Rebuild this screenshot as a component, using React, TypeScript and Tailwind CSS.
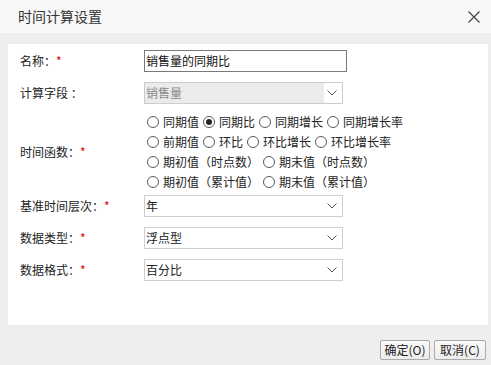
import React from "react";

const font = { fontFamily: '"Noto Sans CJK SC", "Microsoft YaHei", sans-serif' };

function Chevron() {
  return (
    <svg width="10" height="6" viewBox="0 0 10 6" className="block">
      <path d="M0.5 0.5 L5 5 L9.5 0.5" fill="none" stroke="#555" strokeWidth="1" />
    </svg>
  );
}

function Select({ value, disabled }: { value: string; disabled?: boolean }) {
  return (
    <div
      className={`flex h-[22px] w-[199px] items-center border ${
        disabled ? "border-[#cccccc] bg-[#ebebeb] text-[#8a8a8a]" : "border-[#cfcfcf] bg-white text-[#222]"
      }`}
    >
      <span className="flex-1 pl-[1px] text-[12px] leading-none">{value}</span>
      <span className="flex h-full w-[18px] items-center justify-center bg-white pr-[2px]">
        <Chevron />
      </span>
    </div>
  );
}

function Label({ text, req, colon = "：" }: { text: string; req?: boolean; colon?: string }) {
  return (
    <div className="w-[124px] shrink-0 text-[12px] leading-none text-[#222]">
      {text}
      {colon}
      {req && <span className="text-[#e00000]">*</span>}
    </div>
  );
}

function Radio({ label, checked }: { label: string; checked?: boolean }) {
  return (
    <span className="mr-[4px] inline-flex items-center">
      <span className="flex h-[12px] w-[12px] items-center justify-center rounded-full border border-[#5a5a5a] bg-white">
        {checked && <span className="h-[6px] w-[6px] rounded-full bg-[#222]" />}
      </span>
      <span className="ml-[4px] text-[12px] leading-none text-[#222]">{label}</span>
    </span>
  );
}

export default function App() {
  return (
    <div className="flex h-[365px] w-[491px] flex-col bg-[#efeeec]" style={font}>
      <div className="flex h-[33px] items-center justify-between bg-[#f7f7f7] pl-[18px] pr-[11px]">
        <span className="text-[14px] text-[#333]">时间计算设置</span>
        <svg width="12" height="12" viewBox="0 0 12 12">
          <path d="M0.5 0.5 L11.5 11.5 M11.5 0.5 L0.5 11.5" stroke="#444" strokeWidth="1.2" />
        </svg>
      </div>
      <div className="ml-[8px] mr-[3px] mt-[11px] h-[281px] bg-white pl-[12px] pt-[6px]">
        <div className="flex h-[22px] items-center">
          <Label text="名称" req />
          <div className="flex h-[22px] w-[203px] items-center border border-[#7a7a7a] pl-[1px] text-[12px] leading-none text-[#111]">
            销售量的同期比
          </div>
        </div>
        <div className="mt-[10px] flex h-[22px] items-center">
          <Label text="计算字段 " colon=" ：" />
          <Select value="销售量" disabled />
        </div>
        <div className="mt-[8px] flex items-center">
          <Label text="时间函数" req />
          <div className="flex flex-col pl-[3px]">
            <div className="flex h-[20px] items-center">
              <Radio label="同期值" />
              <Radio label="同期比" checked />
              <Radio label="同期增长" />
              <Radio label="同期增长率" />
            </div>
            <div className="flex h-[20px] items-center">
              <Radio label="前期值" />
              <Radio label="环比" />
              <Radio label="环比增长" />
              <Radio label="环比增长率" />
            </div>
            <div className="flex h-[20px] items-center">
              <Radio label="期初值（时点数）" />
              <Radio label="期末值（时点数）" />
            </div>
            <div className="flex h-[20px] items-center">
              <Radio label="期初值（累计值）" />
              <Radio label="期末值（累计值）" />
            </div>
          </div>
        </div>
        <div className="mt-[3px] flex h-[22px] items-center">
          <Label text="基准时间层次" req />
          <Select value="年" />
        </div>
        <div className="mt-[10px] flex h-[22px] items-center">
          <Label text="数据类型" req />
          <Select value="浮点型" />
        </div>
        <div className="mt-[10px] flex h-[22px] items-center">
          <Label text="数据格式" req />
          <Select value="百分比" />
        </div>
      </div>
      <div className="mt-[15px] flex justify-end gap-[4px] pr-[5px]">
        <button className="h-[20px] w-[50px] rounded-[2px] border border-[#a9a9a9] bg-gradient-to-b from-[#fafafa] to-[#ececec] text-[12px] leading-none text-[#222]">
          确定(O)
        </button>
        <button className="h-[20px] w-[52px] rounded-[2px] border border-[#a9a9a9] bg-gradient-to-b from-[#fafafa] to-[#ececec] text-[12px] leading-none text-[#222]">
          取消(C)
        </button>
      </div>
    </div>
  );
}
